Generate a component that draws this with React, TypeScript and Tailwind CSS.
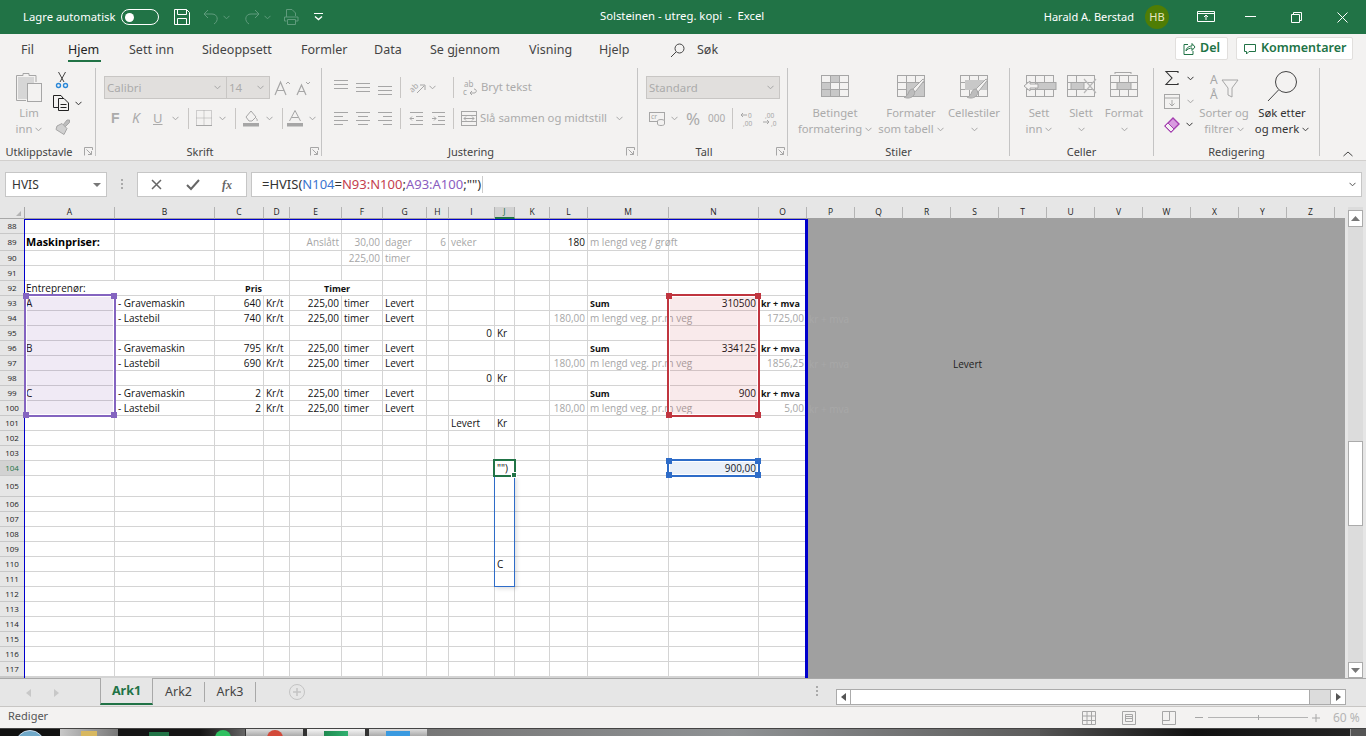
import React from "react";

type P = { w?: number; h?: number; vb?: string; c?: string; children?: React.ReactNode; className?: string };
const Ico = ({ w = 16, h = 16, vb, c = "#a6a6a6", children, className = "" }: P) => (
  <svg width={w} height={h} viewBox={vb || `0 0 ${w} ${h}`} fill="none" stroke={c} strokeWidth={1} className={`shrink-0 overflow-visible ${className}`}>
    {children}
  </svg>
);
const Chev = ({ c = "#a6a6a6", className = "" }: { c?: string; className?: string }) => (
  <svg width={7} height={5} viewBox="0 0 7 5" fill="none" stroke={c} strokeWidth={1} className={`inline-block shrink-0 ${className}`}>
    <path d="M0.5 0.8 3.5 3.8 6.5 0.8" />
  </svg>
);
const Launcher = ({ c = "#a6a6a6", className = "" }: { c?: string; className?: string }) => (
  <Ico w={9} h={9} c={c} className={className}>
    <path d="M.5 8.5V.5H8.5V3M.5 .5" />
    <path d="M2.5 2.5 7.5 7.5M4 7.5H7.5V4" />
  </Ico>
);
const VSep = () => <div className="w-px h-[21px] bg-[#c8c6c4] shrink-0" />;

const Lines = ({ xs, y0 = 2, dy = 4, w = 15 }: { xs: [number, number][]; y0?: number; dy?: number; w?: number }) => (
  <Ico w={w} h={15}>
    {xs.map(([a, b], i) => (
      <path key={i} d={`M${a} ${y0 + i * dy + 0.5}H${b}`} />
    ))}
  </Ico>
);

const Group = ({ w, label, launcher, children }: { w: string; label: string; launcher?: boolean; children: React.ReactNode }) => (
  <div className={`${w} h-[88px] flex flex-col border-r border-[#c4c4c4] shrink-0 relative`}>
    <div className="h-[75px] shrink-0">{children}</div>
    <div className={`h-[17px] text-center text-[11px] leading-[17px] text-[#444] whitespace-nowrap ${launcher ? "pr-[17px]" : ""}`}>{label}</div>
    {launcher && <Launcher className="absolute right-[2px] bottom-[0px]" />}
  </div>
);

const Large = ({ w, icon, a, b, chev = true, dark = false }: { w: string; icon: React.ReactNode; a: string; b?: string; chev?: boolean; dark?: boolean }) => (
  <div className={`${w} flex flex-col items-center shrink-0 text-[11.3px] leading-[16px] ${dark ? "text-[#333]" : "text-[#ababab]"}`}>
    <div className="h-[37px] pt-[4px] flex items-start justify-center">{icon}</div>
    <div className="whitespace-nowrap">{a}</div>
    <div className="whitespace-nowrap flex items-center gap-[3px] h-[16px]">
      {b}
      {chev && <Chev c={dark ? "#444" : "#a6a6a6"} />}
    </div>
  </div>
);

const TableIcon = ({ children }: { children?: React.ReactNode }) => (
  <Ico w={30} h={30}>
    <g fill="none" stroke="#a6a6a6">
      <rect x="1.5" y="3.5" width="27" height="21" />
      <path d="M1.5 10.5H28.5M1.5 17.5H28.5M10.5 3.5V24.5M19.5 3.5V24.5" />
    </g>
    {children}
  </Ico>
);
const Brush = () => (
  <g>
    <path d="M28.5 8 20 19c-1 1-2 1-3 0s0-2 1-3L27 7z" fill="#f3f2f1" stroke="#a6a6a6" />
    <path d="M17 17c-3 0-4 2-5 5-1 2-3 3-4 3 3 2 8 1 10-2 1-2 1-4-1-6z" fill="#bdbdbd" stroke="#a6a6a6" />
  </g>
);

const tabs: [string, string, boolean?][] = [
  ["Fil", "w-[68px] pl-[21px]"],
  ["Hjem", "w-[61px]", true],
  ["Sett inn", "w-[73px]"],
  ["Sideoppsett", "w-[99px]"],
  ["Formler", "w-[73px]"],
  ["Data", "w-[56px]"],
  ["Se gjennom", "w-[99px]"],
  ["Visning", "w-[70px]"],
  ["Hjelp", "w-[71px]"],
];

const Ribbon = () => (
  <div className="h-[99px] bg-[#f3f2f1] border-b border-[#d2d0ce] pt-[6px] flex font-['Noto_Sans',sans-serif] shrink-0 overflow-hidden">
    {/* Utklippstavle */}
    <Group w="w-[96px]" label="Utklippstavle" launcher>
      <div className="flex">
        <div className="w-[53px] pl-[6px] shrink-0">
          <Large
            w="w-[46px]"
            a="Lim"
            b="inn"
            icon={
              <Ico w={28} h={31}>
                <path d="M1.5 3.5H8V1.5H14V3.5H21V10" stroke="#a6a6a6" />
                <path d="M1.5 3.5V28.5H11" stroke="#a6a6a6" />
                <rect x="3" y="5" width="16" height="22" fill="#d6d6d6" stroke="none" />
                <rect x="12.5" y="11.5" width="14" height="18" fill="#f3f2f1" />
              </Ico>
            }
          />
        </div>
        <div className="flex flex-col pt-[3px]">
          <Ico w={16} h={18} c="#444" className="ml-[1px]">
            <path d="M4.5 1 10 11M11.5 1 6 11" />
            <circle cx="4.5" cy="14.5" r="2" stroke="#2b88d8" strokeWidth={1.4} />
            <circle cx="11.5" cy="14.5" r="2" stroke="#2b88d8" strokeWidth={1.4} />
          </Ico>
          <div className="flex items-center mt-[6px] gap-[5px]">
            <Ico w={17} h={16} c="#222">
              <path d="M5 12.5H.5V.5H8L10 3" />
              <path d="M5.5 3.5H11L15.5 8V15.5H5.5Z" fill="#f3f2f1" />
              <path d="M7.5 9.5H13.5M7.5 12.5H13.5" />
            </Ico>
            <Chev c="#333" />
          </div>
          <Ico w={18} h={16} className="mt-[8px]">
            <path d="M10 6 14 1h2.5v2.5L12 8" fill="#bdbdbd" />
            <path d="M4 7 9 4.5l5 5-3 6-8-5z" fill="#d0d0d0" />
          </Ico>
        </div>
      </div>
    </Group>

    {/* Skrift */}
    <Group w="w-[226px]" label="Skrift" launcher>
      <div className="pl-[8px] pt-[8px]">
        <div className="flex items-center h-[23px]">
          <div className="w-[123px] h-[23px] bg-[#e1dfdd] border border-[#c8c6c4] text-[#ababab] text-[11.5px] leading-[21px] pl-[2px] flex items-center justify-between pr-[5px]">
            Calibri
            <Chev />
          </div>
          <div className="w-[43px] h-[23px] bg-[#e1dfdd] border border-[#c8c6c4] border-l-0 text-[#ababab] text-[11.5px] pl-[2px] flex items-center justify-between pr-[5px]">
            14
            <Chev />
          </div>
          <Ico w={17} h={16} className="ml-[4px]">
            <path d="M1 15 6.5 2 12 15M3 10.5H10" strokeWidth={1.2} />
            <path d="M12 4 14 2l2 2" />
          </Ico>
          <Ico w={15} h={16} className="ml-[5px]">
            <path d="M1 15 5.5 5 10 15M2.5 11.5H8.500" strokeWidth={1.2} />
            <path d="M10 2l2 2 2-2" />
          </Ico>
        </div>
        <div className="flex items-center h-[20px] mt-[9px] text-[#ababab]">
          <span className="w-[21px] ml-[7px] font-bold text-[14px] leading-none font-['Liberation_Sans',sans-serif]">F</span>
          <span className="w-[21px] italic text-[14px] font-['Noto_Sans',sans-serif] leading-none">K</span>
          <span className="w-[15px] underline text-[13px] leading-none">U</span>
          <Chev className="ml-[4px]" />
          <div className="w-[9px]" />
          <VSep />
          <Ico w={16} h={16} className="ml-[7px]">
            <path d="M.5 .5H15.500V15.500H.5Z" strokeDasharray="1 1" />
            <path d="M8 .5V15.500M.5 8H15.500" strokeDasharray="1 1" />
            <path d="M0 15.500H16" />
          </Ico>
          <Chev className="ml-[7px]" />
          <div className="w-[9px]" />
          <VSep />
          <Ico w={17} h={18} className="ml-[7px]">
            <path d="M3 8 8 2l5 6-4 4H6z" />
            <path d="M13 9c1 1 1.500 2 1 3" />
            <rect x="0" y="14" width="16" height="3.500" fill="#a6a6a6" stroke="none" />
          </Ico>
          <Chev className="ml-[6px]" />
          <div className="w-[9px]" />
          <VSep />
          <Ico w={16} h={18} className="ml-[4px]">
            <path d="M2.500 12 8 1.500 13.500 12M4.500 8.500H11.500" />
            <rect x="0" y="14" width="16" height="3.500" fill="#a6a6a6" stroke="none" />
          </Ico>
          <Chev className="ml-[6px]" />
        </div>
      </div>
    </Group>

    {/* Justering */}
    <Group w="w-[316px]" label="Justering" launcher>
      <div className="pl-[12px] pt-[8px] text-[11.3px] text-[#ababab]">
        <div className="flex items-center h-[23px]">
          <div className="flex gap-[7px]">
            <Lines xs={[[0, 14], [0, 14], [0, 14]]} y0={0} />
            <Lines xs={[[0, 14], [0, 14], [0, 14]]} y0={3} />
            <Lines xs={[[0, 14], [0, 14], [0, 14]]} y0={6} />
          </div>
          <div className="w-[7px]" />
          <VSep />
          <Ico w={18} h={16} className="ml-[7px]">
            <text x="1" y="11" fontSize="8" fill="#a6a6a6" stroke="none" transform="rotate(-45 5 8)">ab</text>
            <path d="M9 13 16 6M12 5h5v5" />
          </Ico>
          <Chev className="ml-[3px]" />
          <div className="w-[17px]" />
          <VSep />
          <Ico w={15} h={16} className="ml-[9px]">
            <text x="1" y="7" fontSize="8" fill="#a6a6a6" stroke="none">ab</text>
            <text x="0" y="15" fontSize="8" fill="#a6a6a6" stroke="none">c</text>
            <path d="M7 13h4c3 0 3-4 0-4M7 13l2-2M7 13l2 2" />
          </Ico>
          <span className="ml-[3px] whitespace-nowrap">Bryt tekst</span>
        </div>
        <div className="flex items-center h-[20px] mt-[9px]">
          <div className="flex gap-[7px]">
            <Lines xs={[[0, 14], [0, 9], [0, 14], [0, 9]]} y0={1} />
            <Lines xs={[[0, 14], [2, 12], [0, 14], [2, 12]]} y0={1} />
            <Lines xs={[[0, 14], [5, 14], [0, 14], [5, 14]]} y0={1} />
          </div>
          <div className="w-[7px]" />
          <VSep />
          <Ico w={15} h={15} className="ml-[8px]">
            <path d="M1 1.500H14M7 5.500H14M7 9.500H14M1 13.500H14M5 7.500H1M3 5.500 1 7.500l2 2" />
          </Ico>
          <Ico w={15} h={15} className="ml-[7px]">
            <path d="M1 1.500H14M7 5.500H14M7 9.500H14M1 13.500H14M1 7.500H5M3 5.500l2 2-2 2" />
          </Ico>
          <div className="w-[7px]" />
          <VSep />
          <Ico w={16} h={15} className="ml-[7px]">
            <rect x=".5" y=".5" width="15" height="14" />
            <path d="M.5 4.500H15.500M.5 10.500H15.500M3 7.500H13M5 5.500 3 7.500l2 2M11 5.500l2 2-2 2" />
          </Ico>
          <span className="ml-[3px] whitespace-nowrap">Slå sammen og midtstill</span>
          <Chev className="ml-[9px]" />
        </div>
      </div>
    </Group>

    {/* Tall */}
    <Group w="w-[150px]" label="Tall" launcher>
      <div className="pl-[8px] pt-[8px] text-[#ababab]">
        <div className="w-[134px] h-[23px] bg-[#e1dfdd] border border-[#c8c6c4] text-[11.4px] pl-[2px] pr-[5px] flex items-center justify-between">
          Standard
          <Chev />
        </div>
        <div className="flex items-center h-[20px] mt-[9px]">
          <Ico w={17} h={15} className="ml-[3px]">
            <rect x=".5" y="1.500" width="15" height="9" />
            <text x="2" y="8" fontSize="7" fill="#a6a6a6" stroke="none">cr</text>
            <ellipse cx="12" cy="10" rx="3.500" ry="1.500" fill="#f3f2f1" />
            <path d="M8.500 10v3c0 2 7 2 7 0v-3" fill="#f3f2f1" />
          </Ico>
          <Chev className="ml-[5px]" />
          <span className="ml-[8px] text-[17px] leading-none w-[19px]">%</span>
          <span className="ml-[3px] text-[10px] leading-none w-[17px] whitespace-nowrap">000</span>
          <div className="w-[7px]" />
          <VSep />
          <Ico w={15} h={15} className="ml-[7px]">
            <path d="M7 4H1M3 2 1 4l2 2" />
            <text x="8" y="6.500" fontSize="6.500" fill="#a6a6a6" stroke="none">0</text>
            <text x="3" y="14.500" fontSize="6.500" fill="#a6a6a6" stroke="none">,00</text>
          </Ico>
          <Ico w={15} h={15} className="ml-[7px]">
            <text x="3" y="6.500" fontSize="6.500" fill="#a6a6a6" stroke="none">,00</text>
            <path d="M1 11H7M5 9l2 2-2 2" />
            <text x="9" y="14.500" fontSize="6.500" fill="#a6a6a6" stroke="none">,0</text>
          </Ico>
        </div>
      </div>
    </Group>

    {/* Stiler */}
    <Group w="w-[222px]" label="Stiler">
      <div className="flex pl-[8px]">
        <Large
          w="w-[78px]"
          a="Betinget"
          b="formatering"
          icon={
            <TableIcon>
              <rect x="11" y="4" width="8" height="6" fill="#c8c8c8" stroke="none" />
              <rect x="2" y="11" width="8" height="6" fill="#c8c8c8" stroke="none" />
              <rect x="2" y="18" width="17" height="6" fill="#c8c8c8" stroke="none" />
              <path d="M10.500 3.500V24.500M1.500 10.500H19M1.500 17.500H19" />
            </TableIcon>
          }
        />
        <Large
          w="w-[74px]"
          a="Formater"
          b="som tabell"
          icon={
            <TableIcon>
              <rect x="11" y="11" width="17" height="13" fill="#c8c8c8" stroke="none" />
              <Brush />
            </TableIcon>
          }
        />
        <Large
          w="w-[52px]"
          a="Cellestiler"
          icon={
            <TableIcon>
              <rect x="6" y="8" width="22" height="10" fill="#c8c8c8" stroke="none" />
              <Brush />
            </TableIcon>
          }
        />
      </div>
    </Group>

    {/* Celler */}
    <Group w="w-[144px]" label="Celler">
      <div className="flex pl-[7px]">
        <Large
          w="w-[44px]"
          a="Sett"
          b="inn"
          icon={
            <Ico w={33} h={30}>
              <rect x="3.500" y="3.500" width="27" height="21" />
              <path d="M3.500 10.500H30.500M3.500 17.500H30.500M12.500 3.500V24.500M21.500 3.500V24.500" />
              <rect x="14" y="10.500" width="19" height="7" fill="#c8c8c8" stroke="#a6a6a6" />
              <path d="M1 14 7 9v3H15V16H7v3z" fill="#f3f2f1" />
            </Ico>
          }
        />
        <Large
          w="w-[40px]"
          a="Slett"
          b=""
          icon={
            <Ico w={31} h={30}>
              <rect x="1.500" y="3.500" width="27" height="21" />
              <path d="M1.500 10.500H28.500M1.500 17.500H28.500M10.500 3.500V24.500" />
              <rect x="5" y="10.500" width="13" height="7" fill="#c8c8c8" stroke="#a6a6a6" />
              <path d="M18 7 30 21M30 7 18 21" stroke="#b8b8b8" strokeWidth={1.2} />
            </Ico>
          }
        />
        <Large
          w="w-[46px]"
          a="Format"
          b=""
          icon={
            <Ico w={30} h={30}>
              <path d="M6 .500H22M6 0V2M22 0V2" />
              <rect x="1.500" y="3.500" width="27" height="21" />
              <path d="M1.500 10.500H28.500M1.500 17.500H28.500M10.500 3.500V24.500M19.500 3.500V24.500" />
              <rect x="8" y="10.500" width="14" height="7" fill="#c8c8c8" stroke="#a6a6a6" />
            </Ico>
          }
        />
      </div>
    </Group>

    {/* Redigering */}
    <Group w="w-[166px]" label="Redigering">
      <div className="flex pl-[10px]">
        <div className="flex flex-col w-[30px] shrink-0 pt-[2px]">
          <div className="flex items-center gap-[5px] h-[16px]">
            <Ico w={16} h={16} c="#333">
              <path d="M14 3V1.500H2L8 8 2 14.500H14V13" strokeWidth={1.1} />
            </Ico>
            <Chev c="#333" className="ml-[2px]" />
          </div>
          <div className="flex items-center gap-[5px] mt-[8px] h-[15px]">
            <Ico w={16} h={15}>
              <rect x=".5" y=".5" width="15" height="14" />
              <path d="M.5 4H15.500M8 6v6M5.500 9.500 8 12l2.500-2.500" />
            </Ico>
            <Chev className="ml-[2px]" />
          </div>
          <div className="flex items-center gap-[5px] mt-[7px] h-[17px]">
            <Ico w={16} h={16} c="#a43fb0">
              <path d="M1 9 9 1l6 6-8 8z" fill="#d99be0" strokeWidth={1.4} />
              <path d="M4 6l6 6" />
              <path d="M1 9l3-3 6 6-3 3z" fill="#f3f2f1" />
            </Ico>
            <Chev c="#333" className="ml-[1px]" />
          </div>
        </div>
        <Large
          w="w-[60px]"
          a="Sorter og"
          b="filtrer"
          icon={
            <Ico w={30} h={30}>
              <text x="1" y="12" fontSize="12" fill="#a6a6a6" stroke="none">A</text>
              <text x="1" y="27" fontSize="12" fill="#a6a6a6" stroke="none">Å</text>
              <path d="M13 8H29L23 16V25L19 23V16Z" />
            </Ico>
          }
        />
        <Large
          w="w-[56px]"
          dark
          a="Søk etter"
          b="og merk"
          icon={
            <Ico w={30} h={31} c="#444" className="-mt-[1px]">
              <circle cx="19" cy="11" r="10.500" />
              <path d="M11.500 19 1 30" />
            </Ico>
          }
        />
      </div>
    </Group>

    <div className="flex-1 relative">
      <Ico w={10} h={6} c="#444" className="absolute left-[23px] bottom-[3px]">
        <path d="M.5 5 5 1l4.500 4" />
      </Ico>
    </div>
  </div>
);

const TitleBar = () => (
  <div className="h-[34px] bg-[#217346] text-white flex items-center relative shrink-0 font-['Noto_Sans',sans-serif] text-[11.3px]">
    <span className="ml-[23px] w-[98px] whitespace-nowrap">Lagre automatisk</span>
    <div className="w-[38px] h-[16px] rounded-full border border-white relative">
      <div className="absolute left-[3px] top-[2.500px] w-[9px] h-[9px] rounded-full bg-white" />
    </div>
    <Ico w={16} h={16} c="#fff" className="ml-[15px]">
      <path d="M.5 .5H12.500L15.500 3.500V15.500H.5Z" />
      <path d="M3.500 .5V5.500H12.500V.5M3.500 15.500V9.500H12.500V15.500" />
    </Ico>
    <Ico w={16} h={16} c="#5f9b7c" className="ml-[13px]">
      <path d="M1 5 5 9M1 5l4-4M1 5H9c6 0 7 7 2 10" />
    </Ico>
    <Chev c="#5f9b7c" className="ml-[4px]" />
    <Ico w={16} h={16} c="#5f9b7c" className="ml-[14px]">
      <path d="M15 5l-4 4M15 5 11 1M15 5H7C1 5 0 12 5 15" />
    </Ico>
    <Chev c="#5f9b7c" className="ml-[4px]" />
    <Ico w={15} h={16} c="#5f9b7c" className="ml-[13px]">
      <path d="M2.500 8V.5H8L11.500 4V7M2.500 12H.5V8H14V12H12M3.500 10.500H11.500V15.500H3.500Z" />
    </Ico>
    <Ico w={9} h={8} c="#fff" className="ml-[15px]">
      <path d="M0 .5H9" />
      <path d="M1 3.500 4.500 6.500 8 3.500" strokeWidth={1.4} />
    </Ico>
    <div className="absolute left-[600px] top-[7px] whitespace-pre leading-[18px]">Solsteinen - utreg. kopi  -  Excel</div>
    <div className="ml-auto flex items-center">
      <span className="whitespace-nowrap text-[11px]">Harald A. Berstad</span>
      <div className="w-[24px] h-[24px] rounded-full bg-[#4f7d05] ml-[11px] flex items-center justify-center text-[11px] text-[#e8e8c0]">HB</div>
      <Ico w={18} h={12} c="#fff" className="ml-[28px]">
        <path d="M.5 .5H17.500V10.500H.5ZM.5 2.500H17.500" />
        <path d="M9 9V4M7 6 9 4l2 2" />
      </Ico>
      <Ico w={11} h={2} c="#fff" className="ml-[30px]">
        <path d="M0 .5H11" />
      </Ico>
      <Ico w={11} h={11} c="#fff" className="ml-[35px]">
        <path d="M.5 2.500H8.500V10.500H.5ZM2.500 2.500V.5H10.500V8.500H8.500" />
      </Ico>
      <Ico w={11} h={11} c="#fff" className="ml-[35px] mr-[18px]">
        <path d="M.5 .5 10.500 10.500M10.500 .5 .5 10.500" />
      </Ico>
    </div>
  </div>
);

const TabsRow = () => (
  <div className="h-[28px] bg-[#f3f2f1] flex items-start shrink-0 font-['Noto_Sans',sans-serif] text-[12.500px] text-[#444]">
    {tabs.map(([t, w, active]) => (
      <div key={t} className={`${w} pt-[7px] leading-[18px] shrink-0 whitespace-nowrap`}>
        {active ? <span className="inline-block w-[33px] h-[21px] border-b-[2px] border-[#217346] text-[#222]">{t}</span> : t}
      </div>
    ))}
    <Ico w={15} h={15} c="#444" className="mt-[9px]">
      <circle cx="9.500" cy="5.500" r="4.500" />
      <path d="M6 9 1 14" />
    </Ico>
    <span className="ml-[12px] pt-[7px] leading-[18px]">Søk</span>
    <div className="ml-auto mt-[3px] flex gap-[8px] mr-[13px]">
      <div className="w-[53px] h-[23px] bg-white border border-[#e1dfdd] rounded-[2px] flex items-center pl-[7px] gap-[5px] text-[#217346] font-semibold">
        <Ico w={12} h={12} c="#217346">
          <path d="M5 1.500H1V11.500H10V8" />
          <path d="M3 8c0-3 3-5 6-5V.5l3 3.500-3 3.500V5c-2 0-5 1-6 3z" />
        </Ico>
        Del
      </div>
      <div className="w-[117px] h-[23px] bg-white border border-[#e1dfdd] rounded-[2px] flex items-center pl-[7px] gap-[5px] text-[#217346] font-semibold">
        <Ico w={12} h={12} c="#217346">
          <path d="M.5 1.500H11.500V8.500H5L2.500 11V8.500H.5Z" />
        </Ico>
        Kommentarer
      </div>
    </div>
  </div>
);

const FormulaBar = () => (
  <div className="h-[46px] bg-[#e6e6e6] flex items-start pt-[11px] pl-[5px] shrink-0 font-['Noto_Sans',sans-serif]">
    <div className="w-[102px] h-[25px] bg-white border border-[#c6c6c6] flex items-center justify-between pl-[6px] pr-[5px] text-[12px] text-[#333]">
      HVIS
      <svg width="8" height="4" viewBox="0 0 8 4"><path d="M0 0H8L4 4Z" fill="#777" /></svg>
    </div>
    <div className="w-[30px] flex flex-col items-center gap-[2px] pt-[7px]">
      <div className="w-[2px] h-[2px] bg-[#aaa]" />
      <div className="w-[2px] h-[2px] bg-[#aaa]" />
      <div className="w-[2px] h-[2px] bg-[#aaa]" />
    </div>
    <div className="w-[110px] h-[25px] bg-white border border-[#c6c6c6] flex items-center text-[#666]">
      <Ico w={11} h={11} c="#666" className="ml-[13px]">
        <path d="M1 1 10 10M10 1 1 10" strokeWidth={1.500} />
      </Ico>
      <Ico w={14} h={11} c="#666" className="ml-[24px]">
        <path d="M1 6 5 10 13 1" strokeWidth={2} />
      </Ico>
      <span className="ml-[22px] italic font-bold text-[12px] font-['Liberation_Serif',serif]">fx</span>
    </div>
    <div className="ml-[4px] w-[1111px] h-[25px] bg-white border border-[#c6c6c6] flex items-center pl-[10px] pr-[5px] text-[13px] text-[#333] whitespace-pre">
      <span>=HVIS(</span>
      <span className="text-[#3a75d0]">N104</span>
      <span>=</span>
      <span className="text-[#c43e4e]">N93:N100</span>
      <span>;</span>
      <span className="text-[#8a5cc0]">A93:A100</span>
      <span>;"")</span>
      <div className="w-px h-[17px] bg-[#ccc] ml-px" />
      <Chev c="#555" className="ml-auto" />
    </div>
  </div>
);

const colNames = "ABCDEFGHIJKLMNOPQRSTUVWXYZ".split("");
const rowNums = Array.from({ length: 31 }, (_, i) => 88 + i);

const G = "text-[#a6a6a6]";
const R = "text-right pr-[2px]";
type Cell = { t: string; k?: string; noR?: boolean };
const B = "font-bold text-[9px]";
const data: Record<string, Cell> = {
  A89: { t: "Maskinpriser:", k: "font-bold text-[10.8px] text-black -ml-[1px]" },
  E89: { t: "Anslått", k: `${G} ${R}` },
  F89: { t: "30,00", k: `${G} ${R}` },
  G89: { t: "dager", k: G },
  H89: { t: "6", k: `${G} ${R}` },
  I89: { t: "veker", k: G },
  L89: { t: "180", k: R },
  M89: { t: "m lengd veg / grøft", k: G },
  F90: { t: "225,00", k: `${G} ${R}` },
  G90: { t: "timer", k: G },
  A92: { t: "Entreprenør:", k: "-ml-[1px]", noR: true },
  B92: { t: "", noR: true },
  C92: { t: "Pris", k: `${B} pl-[30px]`, noR: true },
  E92: { t: "Timer", k: `${B} pl-[34px]`, noR: true },
  I95: { t: "0", k: R },
  J95: { t: "Kr" },
  I98: { t: "0", k: R },
  J98: { t: "Kr" },
  I101: { t: "Levert" },
  J101: { t: "Kr" },
  J104: { t: '"")' },
  N104: { t: "900,00", k: R },
  J110: { t: "C" },
  A93: { t: "A", k: "-ml-[1px]" },
  A96: { t: "B", k: "-ml-[1px]" },
  A99: { t: "C", k: "-ml-[1px]" },
  S97: { t: "Levert", k: "text-[#222]" },
};
const addMachine = (r: number, name: string, price: string) => {
  data[`B${r}`] = { t: name, k: "pl-[3px]" };
  data[`C${r}`] = { t: price, k: R };
  data[`D${r}`] = { t: "Kr/t" };
  data[`E${r}`] = { t: "225,00", k: R };
  data[`F${r}`] = { t: "timer" };
  data[`G${r}`] = { t: "Levert" };
};
addMachine(93, "- Gravemaskin", "640");
addMachine(94, "- Lastebil", "740");
addMachine(96, "- Gravemaskin", "795");
addMachine(97, "- Lastebil", "690");
addMachine(99, "- Gravemaskin", "2");
addMachine(100, "- Lastebil", "2");
[[93, "310500"], [96, "334125"], [99, "900"]].forEach(([r, v]) => {
  data[`M${r}`] = { t: "Sum", k: B };
  data[`N${r}`] = { t: String(v), k: R };
  data[`O${r}`] = { t: "kr + mva", k: `${B} pl-[1px]` };
});
[[94, "1725,00"], [97, "1856,25"], [100, "5,00"]].forEach(([r, v]) => {
  data[`L${r}`] = { t: "180,00", k: `${G} ${R}` };
  data[`M${r}`] = { t: "m lengd veg. pr.m veg", k: G };
  data[`O${r}`] = { t: String(v), k: `${G} ${R}` };
  data[`P${r}`] = { t: "kr + mva", k: "text-[#a8a8a8]" };
});

const Handle = ({ pos, bg }: { pos: string; bg: string }) => <div className={`absolute w-[6px] h-[6px] ${bg} ${pos}`} />;
const handles = ["-left-[3px] -top-[3px]", "-right-[3px] -top-[3px]", "-left-[3px] -bottom-[3px]", "-right-[3px] -bottom-[3px]"];

const Sheet = () => (
  <div className="flex-1 relative overflow-hidden font-['Open_Sans',sans-serif] text-[10px] leading-none text-[#111]">
    <div className="grid grid-cols-[25px_90px_100px_49px_26px_52px_41px_44px_22px_46px_20px_35px_38px_81px_90px_48px_repeat(11,48px)_10px] grid-rows-[12px_15px_17px_repeat(15,15px)_21px_repeat(11,15px)_15px_1px] w-[1345px] h-[471px]">
      <div className="bg-[#e6e6e6] border-r border-b border-[#a8a8a8] relative">
        <div className="absolute right-[3px] bottom-[2px] w-0 h-0 border-l-[5px] border-l-transparent border-b-[5px] border-b-[#b4b4b4]" />
      </div>
      {colNames.map((c) => (
        <div
          key={c}
          className={`flex items-center justify-center text-[8.500px] border-r border-[#b4b4b4] border-b ${
            c === "J" ? "bg-[#d2d2d2] text-[#217346] border-b-[#217346] border-b-[2px]" : "bg-[#e6e6e6] text-[#222] border-b-[#a0a0a0]"
          }`}
        >
          {c}
        </div>
      ))}
      <div className="bg-[#e6e6e6] border-b border-[#a0a0a0]" />
      {rowNums.map((r) => (
        <React.Fragment key={r}>
          <div
            className={`flex items-center justify-center text-[8px] border-b border-r ${
              r === 104 ? "bg-[#d2d2d2] text-[#217346] border-r-[#217346] border-b-[#c8c8c8]" : "bg-[#e6e6e6] text-[#222] border-b-[#c8c8c8] border-r-[#a0a0a0]"
            } overflow-hidden`}
          >
            {r < 118 ? r : ""}
          </div>
          {colNames.map((c, i) => {
            const d = data[`${c}${r}`];
            const gray = i >= 15;
            return (
              <div
                key={c}
                className={`flex items-center whitespace-nowrap ${gray ? "bg-[#a0a0a0]" : `bg-white border-b border-[#d4d4d4] ${d?.noR ? "" : "border-r"}`}`}
              >
                {d && d.t && <div className={`relative z-10 w-full pl-[2px] ${d.k || ""}`}>{d.t}</div>}
              </div>
            );
          })}
          <div className="bg-[#a0a0a0]" />
        </React.Fragment>
      ))}
    </div>

    {/* page-break frame */}
    <div className="absolute z-20 left-[24px] top-[12px] w-[784px] h-[459px] border-l border-t border-r-[3px] border-[#0000cc] pointer-events-none" />

    {/* formula references */}
    <div className="absolute z-20 left-[24px] top-[87px] w-[92px] h-[123px] border-2 border-[#8464c0] bg-[#7030a0]/10 shadow-[inset_0_0_0_1px_#fff]">
      {handles.map((p) => <Handle key={p} pos={p} bg="bg-[#8464c0]" />)}
    </div>
    <div className="absolute z-20 left-[667px] top-[87px] w-[93px] h-[123px] border-2 border-[#c0353f] bg-[#c0353f]/10 shadow-[inset_0_0_0_1px_#fff]">
      {handles.map((p) => <Handle key={p} pos={p} bg="bg-[#c0353f]" />)}
    </div>
    <div className="absolute z-20 left-[667px] top-[252px] w-[93px] h-[18px] border-2 border-[#2e6cc8] bg-[#2e6cc8]/10 shadow-[inset_0_0_0_1px_#fff]">
      {handles.map((p) => <Handle key={p} pos={p} bg="bg-[#2e6cc8]" />)}
    </div>

    {/* editing cell */}
    <div className="absolute z-20 left-[494px] top-[269px] w-[21px] h-[111px] border border-[#2e6cc8] shadow-[2px_2px_4px_rgba(0,0,0,0.12)]" />
    <div className="absolute z-20 left-[493px] top-[252px] w-[23px] h-[18px] border-2 border-[#217346]">
      <div className="absolute -right-[3px] -bottom-[3px] w-[6px] h-[6px] bg-[#217346] border border-white" />
    </div>
  </div>
);

const VScroll = () => (
  <div className="w-[21px] bg-[#e6e6e6] flex flex-col pl-[3px] shrink-0">
    <div className="w-[15px] h-[471px] bg-[#dcdcdc] flex flex-col items-center">
      <div className="w-[15px] h-[17px] mt-[3px] bg-white border border-[#ababab] flex items-center justify-center shrink-0">
        <svg width="9" height="5" viewBox="0 0 9 5"><path d="M0 5H9L4.500 0Z" fill="#777" /></svg>
      </div>
      <div className="w-[15px] h-[85px] mt-[214px] bg-white border border-[#ababab] shrink-0" />
      <div className="w-[15px] h-[16px] mt-[136px] bg-white border border-[#ababab] flex items-center justify-center shrink-0">
        <svg width="9" height="5" viewBox="0 0 9 5"><path d="M0 0H9L4.500 5Z" fill="#777" /></svg>
      </div>
    </div>
  </div>
);

const SheetBar = () => (
  <div className="h-[29px] bg-[#e6e6e6] border-t border-b border-t-[#a8a8a8] border-b-[#c8c6c4] flex items-start font-['Noto_Sans',sans-serif] text-[12.500px] text-[#444] shrink-0">
    <div className="w-[100px] h-[27px] flex items-center pl-[26px] gap-[23px] shrink-0">
      <svg width="5" height="8" viewBox="0 0 5 8"><path d="M5 0V8L0 4Z" fill="#c8c8c8" /></svg>
      <svg width="5" height="8" viewBox="0 0 5 8"><path d="M0 0V8L5 4Z" fill="#c8c8c8" /></svg>
    </div>
    <div className="w-[53px] h-[27px] -mt-px bg-[#e6e6e6] border-l border-r border-[#a8a8a8] border-b-[2px] border-b-[#217346] text-center font-bold text-[#217346] leading-[26px] shrink-0 relative">Ark1</div>
    <div className="w-[52px] h-[20px] mt-[3px] border-r border-[#a8a8a8] text-center leading-[20px] shrink-0">Ark2</div>
    <div className="w-[51px] h-[20px] mt-[3px] border-r border-[#a8a8a8] text-center leading-[20px] shrink-0">Ark3</div>
    <Ico w={16} h={16} c="#c4c4c4" className="ml-[33px] mt-[5px]">
      <circle cx="8" cy="8" r="7.500" />
      <path d="M8 4V12M4 8H12" strokeWidth={1.500} />
    </Ico>
    <div className="ml-[511px] mt-[7px] flex flex-col gap-[2px] w-[2px]">
      <div className="w-[2px] h-[2px] bg-[#aaa]" />
      <div className="w-[2px] h-[2px] bg-[#aaa]" />
      <div className="w-[2px] h-[2px] bg-[#aaa]" />
    </div>
    <div className="ml-[18px] mt-[10px] w-[510px] h-[16px] flex bg-[#dcdcdc] border border-[#ababab] border-l-[#ababab]">
      <div className="w-[14px] h-full bg-white border-r border-[#ababab] flex items-center justify-center shrink-0">
        <svg width="5" height="8" viewBox="0 0 5 8"><path d="M5 0V8L0 4Z" fill="#555" /></svg>
      </div>
      <div className="w-[459px] h-full bg-white border-r border-[#ababab] shrink-0" />
      <div className="flex-1" />
      <div className="w-[15px] h-full bg-white border-l border-[#ababab] flex items-center justify-center shrink-0">
        <svg width="5" height="8" viewBox="0 0 5 8"><path d="M0 0V8L5 4Z" fill="#555" /></svg>
      </div>
    </div>
  </div>
);

const StatusBar = () => (
  <div className="h-[21px] bg-[#f3f2f1] flex items-center font-['Noto_Sans',sans-serif] text-[11px] text-[#555] shrink-0">
    <span className="ml-[8px] -mt-[2px]">Rediger</span>
    <div className="ml-auto flex items-center">
      <Ico w={14} h={14}>
        <path d="M.5 .5H13.500V13.500H.5ZM.5 5H13.500M.5 9.500H13.500M5 .5V13.500M9.500 .5V13.500" />
      </Ico>
      <Ico w={14} h={14} className="ml-[26px]">
        <path d="M.5 .5H13.500V13.500H.5ZM3.500 3.500H10.500V10.500H3.500ZM3.500 5.500H10.500M3.500 7.500H10.500" />
      </Ico>
      <Ico w={14} h={14} className="ml-[26px]">
        <path d="M.5 .5H13.500V13.500H.5ZM.5 9.500H7.500V.5" />
      </Ico>
      <div className="w-[8px] h-px bg-[#a6a6a6] ml-[19px]" />
      <div className="w-[100px] h-px bg-[#b4b4b4] ml-[5px] relative">
        <div className="absolute left-1/2 -top-[2px] w-px h-[5px] bg-[#a6a6a6]" />
      </div>
      <Ico w={8} h={8} className="ml-[4px]">
        <path d="M0 4H8M4 0V8" />
      </Ico>
      <span className="ml-[13px] w-[25px] mr-[8px] text-[#b4b4b4] text-[12px] whitespace-nowrap">60 %</span>
    </div>
  </div>
);

const Tile = ({ w, k, children }: { w: string; k: string; children?: React.ReactNode }) => (
  <div className={`${w} h-full ${k} flex justify-center overflow-hidden shrink-0`}>{children}</div>
);
const TaskBar = () => (
  <div className="h-[8px] bg-[#111] border-t border-[#444] flex overflow-hidden shrink-0">
    <Tile w="w-[60px]" k="bg-[#111]">
      <div className="w-[30px] h-[30px] rounded-full bg-[#6fa8c8] border border-[#cde] mt-[1px]" />
    </Tile>
    <Tile w="w-[58px]" k="bg-gradient-to-r from-[#c8c8c8] to-[#777]">
      <div className="w-[16px] h-[6px] bg-[#d8b860] mt-[2px]" />
    </Tile>
    <Tile w="w-[82px]" k="bg-[#151515]">
      <div className="w-[20px] h-[4px] bg-[#217346] mt-[3px]" />
    </Tile>
    <Tile w="w-[45px]" k="bg-gradient-to-r from-[#151515] to-[#666]">
      <div className="w-[16px] h-[16px] rounded-full bg-[#2fc060] mt-[1px]" />
    </Tile>
    <Tile w="w-[58px]" k="bg-gradient-to-b from-[#ddd] to-[#aaa] border-l border-[#333]">
      <div className="w-[16px] h-[16px] rounded-full bg-[#d24a3a] mt-[1px]" />
    </Tile>
    <div className="w-[4px] bg-[#333] shrink-0" />
    <Tile w="w-[58px]" k="bg-gradient-to-b from-[#f4f4f4] to-[#ccc]">
      <div className="w-[24px] h-[6px] bg-gradient-to-r from-[#1f8a50] to-[#30b070] mt-[2px]" />
    </Tile>
    <div className="w-[4px] bg-[#333] shrink-0" />
    <Tile w="w-[58px]" k="bg-gradient-to-b from-[#ddd] to-[#aaa]">
      <div className="w-[24px] h-[6px] bg-[#3a9ae0] mt-[2px]" />
    </Tile>
    <div className="flex-1 bg-gradient-to-r from-[#777] via-[#8f9294] to-[#5c5c5c]" />
    <div className="w-[310px] bg-gradient-to-r from-[#555] via-[#111] to-[#222] shrink-0" />
    <div className="w-[16px] bg-[#555] border-l border-[#999] shrink-0" />
  </div>
);

export default function App() {
  return (
    <div className="w-[1366px] h-[736px] overflow-hidden flex flex-col bg-[#e6e6e6]">
      <TitleBar />
      <TabsRow />
      <Ribbon />
      <FormulaBar />
      <div className="h-[471px] flex shrink-0">
        <Sheet />
        <VScroll />
      </div>
      <SheetBar />
      <StatusBar />
      <TaskBar />
    </div>
  );
}
